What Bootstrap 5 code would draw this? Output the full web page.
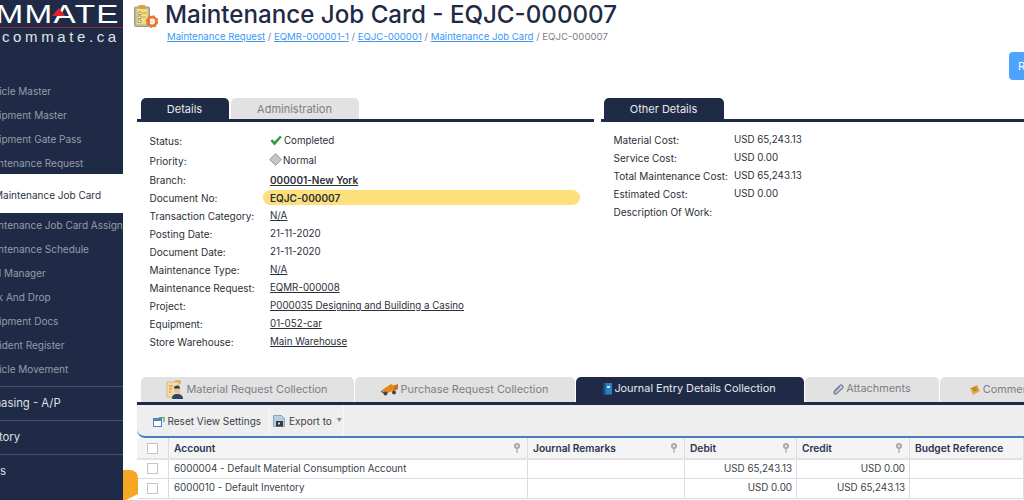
<!DOCTYPE html>
<html lang="en">
<head>
<meta charset="utf-8">
<title>Maintenance Job Card</title>
<link href="https://cdn.jsdelivr.net/npm/bootstrap@5.3.0/dist/css/bootstrap.min.css" rel="stylesheet">
<style>
html,body{height:500px;overflow:hidden}
body{font-family:"Inter","Liberation Sans",sans-serif;font-size:10px;color:#2b2f38;background:#fff}
.shell{width:1024px;height:500px;overflow:hidden}
.side{width:122.5px;height:500px;flex:none;overflow:hidden;background:#1f2b46;color:#969ba8}
.logo{height:174px;padding-top:2px;overflow:hidden}
.logo-big{color:#fff;font:400 25px/24px "Liberation Sans",sans-serif;letter-spacing:1px;white-space:nowrap;width:160px;position:relative;transform-origin:0 0;transform:scaleX(1.33);margin-left:-57px}
.logo-tri{position:absolute;left:81.500px;top:6px;width:0;height:0;border-left:5px solid transparent;border-right:5px solid transparent;border-bottom:8px solid #d9232e}
.logo-rule{height:1px;background:#8c2a3c;margin-top:1px}
.logo-sub{color:#e0e2e6;font:400 15px/18px "Liberation Sans",sans-serif;letter-spacing:3.600px;margin-left:2px;white-space:nowrap}
.logo-menu{margin-top:33px}
.mi{height:24px;line-height:24px;white-space:nowrap;font-size:10px;margin-left:-19px}
.mi-active{background:#fff;color:#2d3444;height:39px;line-height:43px;font-size:10px;margin-left:-6px;white-space:nowrap;width:140px}
.sec{height:34px;line-height:33px;border-top:1px solid #47506a;color:#dde0e6;font-size:11.300px;white-space:nowrap}
.sec span{display:block;margin-left:-30px}
.sec-first{margin-top:5px}
.main{flex:none;width:901.5px;overflow:hidden;height:500px;position:relative}
.orange{position:absolute;left:0;top:470px;width:15px;height:30px;background:#f5a623;border-top-right-radius:8px}
.orange:after{content:"";position:absolute;right:0;bottom:0;border-bottom:6px solid #fff;border-left:12px solid transparent}
.hdr{height:52px;padding-left:11.500px;padding-top:1px;gap:7px}
.hdr svg{flex:none;margin-top:3px}
.ttl{font-size:24.150px;line-height:28px;font-weight:500;color:#1f2b46;margin:0;white-space:nowrap}
.crumbs{font-size:9.600px;line-height:14px;color:#7b7f87;padding-left:2px;white-space:nowrap;margin-top:1px}
.crumbs a{color:#3d97f3}
.actionrow{height:44px;justify-content:flex-end}
.rbtn{height:28px;width:30px;margin-right:-15px;background:#4ea3ff;border:0;border-radius:4px;color:#fff;font-size:11px;padding:0 0 0 9px;text-align:left}
.panels{padding-left:14px}
.pleft{width:457px;flex:none}
.pright{width:500px;flex:none;margin-left:7px}
.tabrow{height:23px;border-bottom:3px solid #1f2b46;padding-left:4px;gap:2px;box-sizing:content-box;margin:0;flex-wrap:nowrap}
.tabx{display:block;height:21px;line-height:22px;margin-top:2px;text-align:center;font-size:11px;border-radius:5px 5px 0 0;background:#e2e2e2;color:#7b7f87;white-space:nowrap;padding:0;text-decoration:none}
.tabx.on{background:#1f2b46;color:#e6e8ee}
.w-det{width:88px}.w-adm{width:128px}.w-oth{width:120px;margin-left:-1px}
.fields{padding:10px 0 0 13px}
.fields-r{padding-top:9px}
.frow{height:18px;line-height:18px;white-space:nowrap;position:relative}
.frow.tall{height:20px}
.frow.tall2{height:19px}
.flab{width:120.500px;flex:none;position:relative}
.fval{position:relative;font-size:9.750px}
.fval a{color:#2b2f38}
.fval b{font-weight:600;font-size:10px}
.pill{position:absolute;left:113px;right:14px;top:1px;height:15px;border-radius:8px;background:#fde07c}
.ico{display:inline-block;vertical-align:-2px;margin-right:2px}
.ico-d{margin-left:-1px;margin-right:1px}
.tabs2{margin-top:26px;padding-left:4px;gap:1px;height:25px;box-sizing:content-box;border-bottom:3px solid #1f2b46;flex-wrap:nowrap;margin-bottom:0;margin-left:14px;width:887px}
.tabs2 .tabx{height:25px;line-height:25px;margin:0;font-size:10.900px;flex:none}
.tabs2 .tabx.on,.tabs2 .tabx.t4{line-height:23px}
.tabs2 .tabx svg{vertical-align:-3px;margin-right:2px}
.tabs2 .tabx svg.tall-i{vertical-align:-6px}
.t1{width:213px}.t2{width:220px}.t3{width:228px}.t4{width:134px;margin-left:1px}.t5{width:128px}
.lower{margin-left:14px;width:887px}
.toolb{height:33px;background:#eee;border-bottom:2px solid #4a7cc0;border-bottom-left-radius:8px;padding-left:16px;align-items:stretch}
.tb{display:flex;align-items:center;gap:3px;color:#3a3f4a;font-size:10px;padding:1px 8px 0 0;border-right:1px solid #f8f8f8;white-space:nowrap}
.tb+.tb{padding-left:3px;padding-right:1px;gap:4px}
.caret-s{color:#888;font-size:5px;margin-left:1px}
.grid{table-layout:fixed;width:887px;border-collapse:collapse;margin:0;font-size:9.800px}
.c1{width:32px}.c2{width:359px}.c3{width:157px}.c4{width:112px}.c5{width:113px}
.grid th,.grid td{padding:0 4px 0 5px;border:1px solid #dcdcdc;border-top:0;white-space:nowrap;overflow:hidden;color:#3a3f4a}
.grid th{height:21px;background:#f4f4f4;font-weight:600;font-size:10.200px;color:#2b3550;position:relative;border-bottom:2px solid #e2e2e2;padding-top:1px}
.grid td{height:19.500px}
.grid tr>*:first-child{border-left:0;text-align:center;padding:0}
.chk{display:inline-block;width:11px;height:11px;box-sizing:border-box;background:#fff;border:1.500px solid #c4c4c4;vertical-align:middle}
.pin{position:absolute;right:6px;top:5px}
</style>
</head>
<body>
<svg width="0" height="0" class="position-absolute">
  <symbol id="pinI" viewBox="0 0 8 10"><circle cx="4" cy="3" r="3" fill="#a8a8a8"/><circle cx="4" cy="3" r="1.200" fill="#e4e4e4"/><rect x="3.400" y="5" width="1.200" height="5" fill="#a8a8a8"/></symbol>
</svg>
<div class="shell d-flex">
  <aside class="side">
    <div class="logo">
      <div class="logo-big">COMMATE<span class="logo-tri"></span></div>
      <div class="logo-rule"></div>
      <div class="logo-sub">commate.ca</div>
      <div class="logo-menu">
        <div class="mi">Vehicle Master</div>
        <div class="mi">Equipment Master</div>
        <div class="mi">Equipment Gate Pass</div>
        <div class="mi">Maintenance Request</div>
      </div>
    </div>
    <div class="mi-active">Maintenance Job Card</div>
    <div>
      <div class="mi">Maintenance Job Card Assignment</div>
      <div class="mi">Maintenance Schedule</div>
      <div class="mi">Tool Manager</div>
      <div class="mi">Task And Drop</div>
      <div class="mi">Equipment Docs</div>
      <div class="mi">Accident Register</div>
      <div class="mi">Vehicle Movement</div>
    </div>
    <div class="sec sec-first"><span>Purchasing - A/P</span></div>
    <div class="sec"><span>Inventory</span></div>
    <div class="sec"><span>Assets</span></div>
  </aside>
  <main class="main">
    <div class="orange"></div>
    <div class="hdr d-flex">
      <svg width="24" height="24" viewBox="0 0 24 24"><rect x=".5" y="3" width="15" height="19.500" rx="1" fill="#bdb59a" stroke="#9a9a8c"/><rect x="2.500" y="5" width="11" height="15.500" fill="#f7dc7c"/><rect x="4.500" y="1" width="7" height="4" rx="1" fill="#d9a441"/><path d="M4 8h3v2.500H4zM4 12h3v2.500H4zM4 16h3v2.500H4z" fill="#fff" stroke="#77786e" stroke-width=".7"/><path d="M8.500 9h4M8.500 13h3" stroke="#b89a48"/><circle cx="18" cy="17.500" r="4.400" fill="none" stroke="#e8743b" stroke-width="2.800"/><circle cx="18" cy="17.500" r="5.700" fill="none" stroke="#e8743b" stroke-width="1.400" stroke-dasharray="2 2.500"/><circle cx="18" cy="17.500" r="2" fill="#fbe2b8"/></svg>
      <div>
        <h1 class="ttl">Maintenance Job Card - EQJC-000007</h1>
        <div class="crumbs"><a href="#">Maintenance Request</a> / <a href="#">EQMR-000001-1</a> / <a href="#">EQJC-000001</a> / <a href="#">Maintenance Job Card</a> / EQJC-000007</div>
      </div>
    </div>
    <div class="actionrow d-flex"><button class="rbtn" type="button">R</button></div>
    <div class="panels d-flex">
      <section class="pleft">
        <ul class="nav tabrow">
          <li><a class="tabx on w-det" href="#">Details</a></li>
          <li><a class="tabx w-adm" href="#">Administration</a></li>
        </ul>
        <div class="fields">
          <div class="frow tall d-flex"><div class="flab">Status:</div><div class="fval"><svg class="ico" width="12" height="11" viewBox="0 0 12 11"><path d="M.5 6l1.800-1.800L4.500 6.500 10 .8 11.800 2 4.500 10.500z" fill="#2e9e3c"/></svg>Completed</div></div>
          <div class="frow tall2 d-flex"><div class="flab">Priority:</div><div class="fval"><svg class="ico ico-d" width="13" height="13" viewBox="0 0 13 13"><path d="M6.500 .7L12.300 6.500 6.500 12.300 .7 6.500z" fill="#c6c6c6" stroke="#7e7e7e" stroke-width=".8"/></svg>Normal</div></div>
          <div class="frow d-flex"><div class="flab">Branch:</div><div class="fval"><a href="#"><b>000001-New York</b></a></div></div>
          <div class="frow d-flex"><div class="pill"></div><div class="flab">Document No:</div><div class="fval"><b>EQJC-000007</b></div></div>
          <div class="frow d-flex"><div class="flab">Transaction Category:</div><div class="fval"><a href="#">N/A</a></div></div>
          <div class="frow d-flex"><div class="flab">Posting Date:</div><div class="fval">21-11-2020</div></div>
          <div class="frow d-flex"><div class="flab">Document Date:</div><div class="fval">21-11-2020</div></div>
          <div class="frow d-flex"><div class="flab">Maintenance Type:</div><div class="fval"><a href="#">N/A</a></div></div>
          <div class="frow d-flex"><div class="flab">Maintenance Request:</div><div class="fval"><a href="#">EQMR-000008</a></div></div>
          <div class="frow d-flex"><div class="flab">Project:</div><div class="fval"><a href="#">P000035 Designing and Building a Casino</a></div></div>
          <div class="frow d-flex"><div class="flab">Equipment:</div><div class="fval"><a href="#">01-052-car</a></div></div>
          <div class="frow d-flex"><div class="flab">Store Warehouse:</div><div class="fval"><a href="#">Main Warehouse</a></div></div>
        </div>
      </section>
      <section class="pright">
        <ul class="nav tabrow">
          <li><a class="tabx on w-oth" href="#">Other Details</a></li>
        </ul>
        <div class="fields fields-r">
          <div class="frow d-flex"><div class="flab">Material Cost:</div><div class="fval">USD 65,243.13</div></div>
          <div class="frow d-flex"><div class="flab">Service Cost:</div><div class="fval">USD 0.00</div></div>
          <div class="frow d-flex"><div class="flab">Total Maintenance Cost:</div><div class="fval">USD 65,243.13</div></div>
          <div class="frow d-flex"><div class="flab">Estimated Cost:</div><div class="fval">USD 0.00</div></div>
          <div class="frow d-flex"><div class="flab">Description Of Work:</div></div>
        </div>
      </section>
    </div>
    <ul class="nav tabs2">
      <li><a class="tabx t1" href="#"><svg class="tall-i" width="18" height="19" viewBox="0 0 18 19"><rect x="1" y="2" width="12" height="15" fill="#f5dca6" stroke="#d8a860" stroke-width=".7"/><path d="M9 1h5v3" fill="none" stroke="#d8862e"/><path d="M3 6h4M3 9h3M3 12h2" stroke="#c9782f"/><circle cx="11" cy="10" r="3" fill="#e9c29b"/><path d="M8 8.500a3 3 0 0 1 6 0z" fill="#3a3a3a"/><path d="M6 19c0-4 2-5 5-5s6 1 6 5z" fill="#2f4468"/></svg>Material Request Collection</a></li>
      <li><a class="tabx t2" href="#"><svg width="18" height="14" viewBox="0 0 18 14"><path d="M1 8l9-6 3 1.500v5L4 12z" fill="#e08a1e"/><path d="M13 3.500l4-1.500v5l-4 2z" fill="#c8701a"/><path d="M0 8.500l5 3v1L0 10z" fill="#555"/><circle cx="4.500" cy="11.500" r="2" fill="#444"/><circle cx="13" cy="10.500" r="2" fill="#444"/></svg>Purchase Request Collection</a></li>
      <li><a class="tabx t3 on" href="#"><svg width="9" height="13" viewBox="0 0 9 13"><rect x="0" y="1" width="9" height="11.500" fill="#2e7fc2"/><rect x="0" y="1" width="2.500" height="11.500" fill="#174d80"/><rect x="4" y="4" width="3" height="2" fill="#cfe5f5"/></svg>Journal Entry Details Collection</a></li>
      <li><a class="tabx t4" href="#"><svg width="12" height="12" viewBox="0 0 12 12"><path d="M2 8.500L8 2.500a1.800 1.800 0 0 1 2.500 2.500L4.500 10.500a1.200 1.200 0 0 1-2-1.700L8 3.500" fill="none" stroke="#76879b" stroke-width="1.500"/></svg>Attachments</a></li>
      <li><a class="tabx t5" href="#"><svg width="12" height="12" viewBox="0 0 12 12"><path d="M1 4l7-3 3 6-7 4z" fill="#e0a94c"/><path d="M3.500 5l4-1.500M4.500 7l4-1.500" stroke="#a8561e"/></svg>Comments</a></li>
    </ul>
    <div class="lower">
      <div class="toolb d-flex">
        <div class="tb"><svg width="12" height="12" viewBox="0 0 12 12"><rect x=".5" y="3.500" width="8" height="8" fill="#fff" stroke="#4a86c0"/><rect x=".5" y="3.500" width="8" height="2.500" fill="#4a86c0"/><path d="M6 2.500h5V7" fill="none" stroke="#5aa55a" stroke-width="1.200"/></svg>Reset View Settings</div>
        <div class="tb"><svg width="12" height="12" viewBox="0 0 12 12"><path d="M.5.5h8l3 3v8H.5z" fill="#b9cde2" stroke="#6d8cab" stroke-width=".7"/><rect x="3" y="6" width="7" height="5.500" fill="#33393f"/><rect x="5" y="7.500" width="2" height="2" fill="#ddd"/></svg>Export to<span class="caret-s">▼</span></div>
      </div>
      <table class="grid">
        <colgroup><col class="c1"><col class="c2"><col class="c3"><col class="c4"><col class="c5"><col></colgroup>
        <thead>
          <tr><th><span class="chk"></span></th><th>Account<svg class="pin" width="8" height="10"><use href="#pinI"/></svg></th><th>Journal Remarks<svg class="pin" width="8" height="10"><use href="#pinI"/></svg></th><th>Debit<svg class="pin" width="8" height="10"><use href="#pinI"/></svg></th><th>Credit<svg class="pin" width="8" height="10"><use href="#pinI"/></svg></th><th>Budget Reference</th></tr>
        </thead>
        <tbody>
          <tr><td><span class="chk"></span></td><td>6000004 - Default Material Consumption Account</td><td></td><td class="text-end">USD 65,243.13</td><td class="text-end">USD 0.00</td><td></td></tr>
          <tr><td><span class="chk"></span></td><td>6000010 - Default Inventory</td><td></td><td class="text-end">USD 0.00</td><td class="text-end">USD 65,243.13</td><td></td></tr>
        </tbody>
      </table>
    </div>
  </main>
</div>
</body>
</html>
